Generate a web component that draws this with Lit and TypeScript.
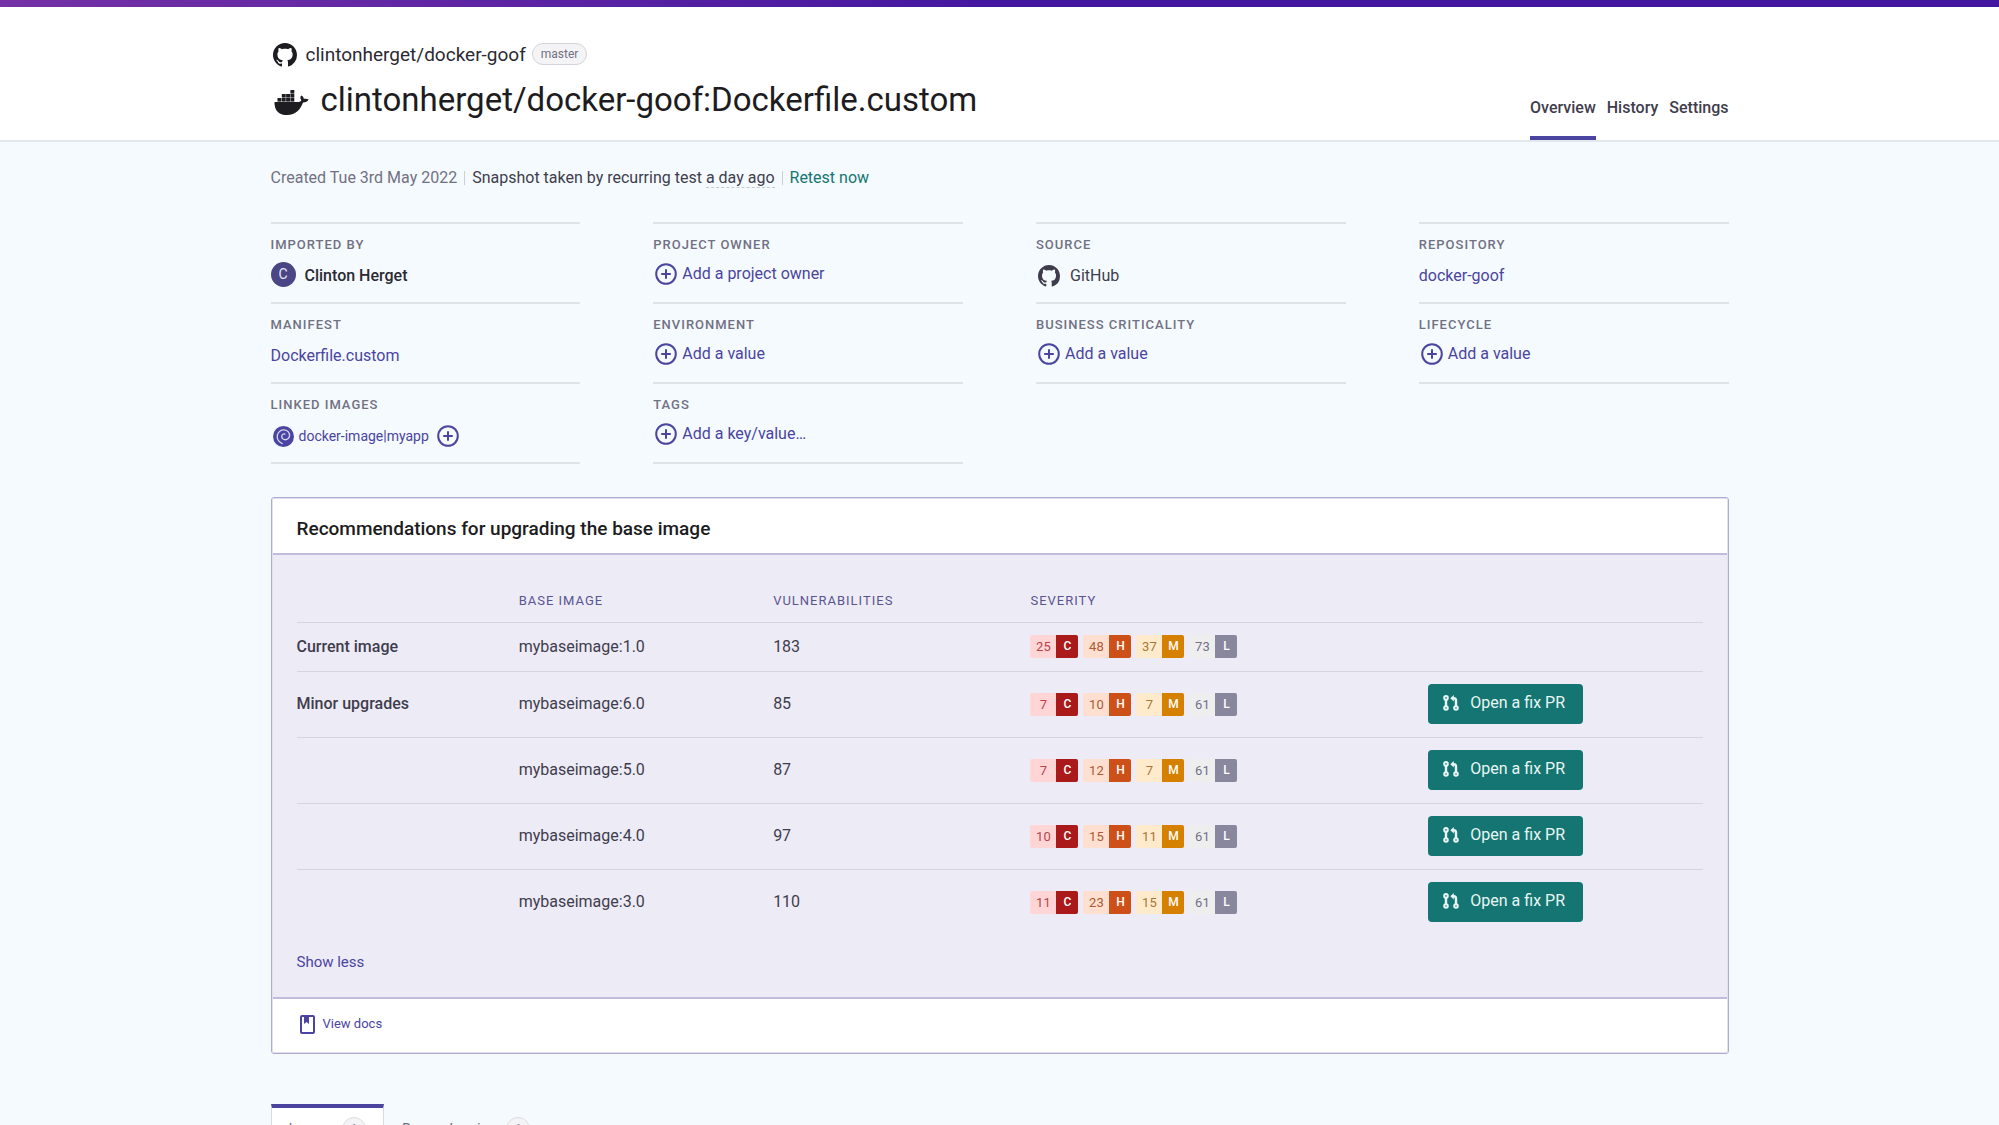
import { LitElement, html, css, svg, nothing } from "lit";
import type { TemplateResult } from "lit";
import { customElement, property } from "lit/decorators.js";

const githubIcon = html`<svg class="github" viewBox="0 0 16 16" aria-hidden="true">
  <path fill="currentColor" fill-rule="evenodd" d="M8 0C3.58 0 0 3.58 0 8c0 3.54 2.29 6.53 5.47 7.59.4.07.55-.17.55-.38 0-.19-.01-.82-.01-1.49-2.01.37-2.53-.49-2.69-.94-.09-.23-.48-.94-.82-1.13-.28-.15-.68-.52-.01-.53.63-.01 1.08.58 1.23.82.72 1.21 1.87.87 2.33.66.07-.52.28-.87.51-1.07-1.78-.2-3.64-.89-3.64-3.95 0-.87.31-1.59.82-2.15-.08-.2-.36-1.02.08-2.12 0 0 .67-.21 2.2.82.64-.18 1.32-.27 2-.27s1.36.09 2 .27c1.53-1.04 2.2-.82 2.2-.82.44 1.1.16 1.92.08 2.12.51.56.82 1.27.82 2.15 0 3.07-1.87 3.75-3.65 3.95.29.25.54.73.54 1.48 0 1.07-.01 1.93-.01 2.2 0 .21.15.46.55.38A8.01 8.01 0 0 0 16 8c0-4.42-3.58-8-8-8z"/>
</svg>`;

const dockerBlocks = [[3.5, 9], [7.8, 9], [12.1, 9], [16.4, 9], [7.8, 5], [12.1, 5], [16.4, 5], [16.4, 1]];

const dockerIcon = html`<svg class="docker" viewBox="0 0 35 27" aria-hidden="true">
  ${dockerBlocks.map(([x, y]) => svg`<rect x=${x} y=${y} width="3.9" height="3.6" fill="currentColor"/>`)}
  <path fill="currentColor" d="M.5 12.9H24.5C26 12.9 27 12.1 27.3 11.2 25.9 9.2 26 7.3 27.6 6.6 29 7.6 29.8 8.7 29.8 9.9 31.5 9.5 33.3 9.8 34.6 10.6 33.8 12.6 31.8 13.6 29 13.6 26.5 20.5 22 26 13 26 5 26 .3 21.5.5 12.9z"/>
</svg>`;

const plusIcon = html`<svg class="plus" viewBox="0 0 22 22" aria-hidden="true">
  <circle cx="11" cy="11" r="9.8" fill="none" stroke="currentColor" stroke-width="2"/>
  <path d="M11 6.2v9.6M6.2 11h9.6" fill="none" stroke="currentColor" stroke-width="2"/>
</svg>`;

const swirlIcon = html`<svg class="swirl" viewBox="0 0 21 21" aria-hidden="true">
  <circle cx="10.5" cy="10.5" r="10.5" fill="currentColor"/>
  <path d="M9.2 17.6C5.6 16 3.8 12.6 4.4 9.2 5 5.8 8 3.6 11.3 3.9c3.4.3 5.6 3 5.2 6-.3 2.5-2.4 4.1-4.7 3.8-2.1-.3-3.3-2-3-3.7.3-1.5 1.6-2.3 3-2" fill="none" stroke="#d8d5ee" stroke-width="1.3" stroke-linecap="round"/>
</svg>`;

const pullIcon = html`<svg class="pull" viewBox="0 0 16 16" aria-hidden="true">
  <g fill="none" stroke="currentColor">
    <g stroke-width="2"><circle cx="3" cy="2.9" r="1.8"/><circle cx="3" cy="13" r="1.8"/><circle cx="13" cy="13" r="1.8"/></g>
    <path stroke-width="2.4" d="M3 4.7v6.5M13 11.2V5.500C13 4 12.3 3.2 10.8 3.2H9.500"/>
  </g>
  <path fill="currentColor" d="M10.8 0v6.4L7.3 3.2z"/>
</svg>`;

const docsIcon = html`<svg class="docs" viewBox="0 0 15 19" aria-hidden="true">
  <rect x="1" y="1" width="13" height="17" rx="1" fill="none" stroke="currentColor" stroke-width="2"/>
  <path d="M4 1h5v8L6.5 7 4 9z" fill="currentColor"/>
</svg>`;

interface Fact { label: string; body: TemplateResult; }

const add = (text: string) => html`<button class="add" type="button">${plusIcon}<span>${text}</span></button>`;

const facts: Fact[][] = [
  [
    { label: "Imported by", body: html`<span class="person"><span class="avatar">C</span><span class="plain">Clinton Herget</span></span>` },
    { label: "Manifest", body: html`<a class="link plain" href="#manifest">Dockerfile.custom</a>` },
    { label: "Linked images", body: html`<span class="linked plain"><a class="link small" href="#image">${swirlIcon}docker-image|myapp</a><button class="add" type="button" aria-label="Link an image">${plusIcon}</button></span>` },
  ],
  [
    { label: "Project owner", body: add("Add a project owner") },
    { label: "Environment", body: add("Add a value") },
    { label: "Tags", body: add("Add a key/value…") },
  ],
  [
    { label: "Source", body: html`<span class="source plain">${githubIcon}GitHub</span>` },
    { label: "Business criticality", body: add("Add a value") },
  ],
  [
    { label: "Repository", body: html`<a class="link plain" href="#repository">docker-goof</a>` },
    { label: "Lifecycle", body: add("Add a value") },
  ],
];

interface Upgrade { group: string; image: string; total: number; counts: number[]; fix: boolean; }

const upgrades: Upgrade[] = [
  { group: "Current image", image: "mybaseimage:1.0", total: 183, counts: [25, 48, 37, 73], fix: false },
  { group: "Minor upgrades", image: "mybaseimage:6.0", total: 85, counts: [7, 10, 7, 61], fix: true },
  { group: "", image: "mybaseimage:5.0", total: 87, counts: [7, 12, 7, 61], fix: true },
  { group: "", image: "mybaseimage:4.0", total: 97, counts: [10, 15, 11, 61], fix: true },
  { group: "", image: "mybaseimage:3.0", total: 110, counts: [11, 23, 15, 61], fix: true },
];

@customElement("severity-list")
export class SeverityList extends LitElement {
  @property({ attribute: false }) counts: number[] = [];

  static styles = css`
    :host { display: flex; gap: 5px; font-size: 13px; line-height: 23px; text-align: center; }
    .level { display: flex; border-radius: 2px; overflow: hidden; }
    .count { width: 26px; }
    .letter { width: 22px; color: #fff; font-size: 12px; font-weight: 500; }
    .c .count { background: #ffd6d5; color: #b8434c; }
    .c .letter { background: #ab1a1a; }
    .h .count { background: #ffdfd0; color: #ad5a35; }
    .h .letter { background: #ce5019; }
    .m .count { background: #ffebcb; color: #a9763a; }
    .m .letter { background: #d68000; }
    .l .count { background: #eeeeef; color: #727189; }
    .l .letter { background: #88879e; }
  `;

  render() {
    return ["C", "H", "M", "L"].map((letter, i) => html`
      <span class="level ${letter.toLowerCase()}"><span class="count">${this.counts[i]}</span><span class="letter">${letter}</span></span>`);
  }
}

@customElement("app-root")
export class AppRoot extends LitElement {
  static styles = css`
    :host {
      display: block;
      height: 100vh;
      overflow: hidden;
      background: #f4fafd;
      color: #3f3d4d;
      font: 400 16px/24px Roboto, "Liberation Sans", sans-serif;
    }
    * { box-sizing: border-box; }
    a { color: inherit; text-decoration: none; }
    button { padding: 0; border: 0; background: none; color: inherit; font: inherit; cursor: pointer; }
    h1, h2, dl, dd { margin: 0; padding: 0; font-weight: inherit; }
    svg { display: block; flex: none; }
    .wrap { width: calc(100% - 48px); max-width: 1458px; margin: 0 auto; }

    .stripe { height: 7px; background: linear-gradient(to right, #7531a6, #4417a0 50%, #4417a0); }
    .header { background: #fff; border-bottom: 2px solid #e3e8ed; }
    .header .wrap { display: flex; justify-content: space-between; align-items: flex-end; padding-top: 32px; }
    .repo { display: flex; align-items: center; height: 32px; font-size: 19px; color: #2b2a33; }
    .repo .github { width: 24px; height: 24px; margin: 0 9px 0 2px; color: #1c1c21; }
    .branch { margin: 0 0 3px 6px; padding: 0 8px; border: 1px solid #d3d3d9; border-radius: 12px; background: #f4f4f6; color: #727184; font-size: 12px; line-height: 20px; }
    .title { display: flex; align-items: center; height: 40px; margin: 9px 0 20px; font-size: 33px; color: #1c1c21; }
    .docker { width: 35px; height: 27px; margin: 5px 12px 0 3px; }
    .tabs { display: flex; gap: 11px; font-weight: 500; }
    .tabs a { padding-bottom: 16px; border-bottom: 4px solid transparent; }
    .tabs a.current { border-color: #4b45a1; }

    .status { display: flex; align-items: center; margin: 24px auto 32px; }
    .status > * + * { margin-left: 7px; padding-left: 8px; background: linear-gradient(#c9d0d8, #c9d0d8) left center / 1px 14px no-repeat; }
    .created { color: #727184; }
    .ago { border-bottom: 1px dashed #c5c8d0; }
    .retest { color: #147572; }

    .facts { display: grid; grid-template-columns: repeat(4, 1fr); column-gap: 73px; align-items: start; }
    .column { border-top: 2px solid #dfe2e7; }
    .fact { height: 80px; padding-top: 13px; border-bottom: 2px solid #dfe2e7; }
    dt { font-size: 13px; font-weight: 500; line-height: 16px; letter-spacing: 1px; text-transform: uppercase; color: #727184; }
    dd { display: flex; align-items: center; height: 32px; margin-top: 5px; }
    .link, .add { color: #4b45a1; }
    .add { display: flex; align-items: center; gap: 5px; margin-left: 2px; }
    .plus { width: 22px; height: 22px; }
    .plain { padding-top: 4px; }
    .person { display: flex; align-items: center; gap: 9px; font-weight: 500; color: #2b2a33; }
    .avatar { width: 25px; border-radius: 50%; background: #4a4585; color: #e6e4f4; font-size: 14px; font-weight: 400; line-height: 25px; text-align: center; }
    .source { display: flex; align-items: center; gap: 10px; }
    .source .github { width: 22px; height: 22px; margin-left: 2px; }
    .linked { display: flex; align-items: center; gap: 6px; }
    .small { display: flex; align-items: center; gap: 5px; font-size: 14px; }
    .swirl { width: 21px; height: 21px; margin-left: 2px; }

    .card { margin: 33px auto 50px; border: 1px solid #aeaad0; outline: 1px solid #e2e0ef; outline-offset: -2px; border-radius: 3px; background: #fff; }
    h2 { padding: 19px 25px 12px; font-size: 19px; font-weight: 500; color: #1c1c21; }
    .body { padding: 34px 25px 23px; border-top: 2px solid #c0bddb; border-bottom: 2px solid #c0bddb; background: #edebf6; }
    table { width: 100%; border-collapse: collapse; table-layout: fixed; text-align: left; }
    th, td { padding: 0; }
    thead th { height: 33px; padding-bottom: 9px; font-size: 13px; font-weight: 400; line-height: 16px; letter-spacing: 1px; text-transform: uppercase; color: #5a558f; }
    tbody th { font-weight: 500; }
    tbody tr { height: 66px; border-top: 1px solid #d6d3e2; }
    tbody tr:first-child { height: 49px; }
    .group { width: 15.8%; }
    .image { width: 18.1%; }
    .total { width: 18.3%; }
    .severity { width: 28.3%; }
    .fix { display: flex; align-items: center; gap: 11px; height: 40px; padding: 0 18px 3px 15px; border-radius: 4px; background: #147572; color: #e9f5f4; }
    .pull { width: 16px; height: 16px; }
    .less { display: block; margin-top: 15px; font-size: 15px; color: #4b45a1; }
    .footer { padding: 13px 28px 17px; }
    .footer a { display: flex; align-items: center; gap: 8px; font-size: 13px; color: #4b45a1; }
    .docs { width: 15px; height: 19px; }

    .views { display: flex; }
    .views button { display: flex; align-items: center; gap: 10px; height: 48px; padding: 0 17px 2px; border: 1px solid transparent; border-top: 4px solid transparent; color: #727184; font-size: 15px; }
    .views .selected { border-color: #4b45a1 #d9d9e4 #fff; background: #fff; }
    .badge { width: 24px; border: 1px solid #dcdce2; border-radius: 50%; background: #f4f4f6; font-size: 12px; line-height: 22px; }
  `;

  render() {
    return html`
      <div class="stripe"></div>
      <header class="header">
        <div class="wrap">
          <div>
            <div class="repo">${githubIcon}<a href="#repo">clintonherget/docker-goof</a><span class="branch">master</span></div>
            <h1 class="title">${dockerIcon}clintonherget/docker-goof:Dockerfile.custom</h1>
          </div>
          <nav class="tabs">
            <a class="current" href="#overview" aria-current="page">Overview</a>
            <a href="#history">History</a>
            <a href="#settings">Settings</a>
          </nav>
        </div>
      </header>
      <main>
        <div class="wrap status">
          <span class="created">Created Tue 3rd May 2022</span>
          <span>Snapshot taken by recurring test <span class="ago">a day ago</span></span>
          <button class="retest" type="button">Retest now</button>
        </div>
        <div class="wrap facts">
          ${facts.map((column) => html`<dl class="column">
            ${column.map((fact) => html`<div class="fact"><dt>${fact.label}</dt><dd>${fact.body}</dd></div>`)}
          </dl>`)}
        </div>
        <section class="wrap card">
          <h2>Recommendations for upgrading the base image</h2>
          <div class="body">
            <table>
              <thead>
                <tr>
                  <th class="group"></th>
                  <th class="image" scope="col">Base image</th>
                  <th class="total" scope="col">Vulnerabilities</th>
                  <th class="severity" scope="col">Severity</th>
                  <th></th>
                </tr>
              </thead>
              <tbody>
                ${upgrades.map((row) => html`<tr>
                  <th scope="row">${row.group}</th>
                  <td>${row.image}</td>
                  <td>${row.total}</td>
                  <td><severity-list .counts=${row.counts}></severity-list></td>
                  <td>${row.fix ? html`<button class="fix" type="button">${pullIcon}Open a fix PR</button>` : nothing}</td>
                </tr>`)}
              </tbody>
            </table>
            <button class="less" type="button">Show less</button>
          </div>
          <div class="footer"><a href="#docs">${docsIcon}View docs</a></div>
        </section>
        <div class="wrap views">
          <button class="selected" type="button">Issues<span class="badge">1</span></button>
          <button type="button">Dependencies<span class="badge">1</span></button>
        </div>
      </main>
    `;
  }
}
